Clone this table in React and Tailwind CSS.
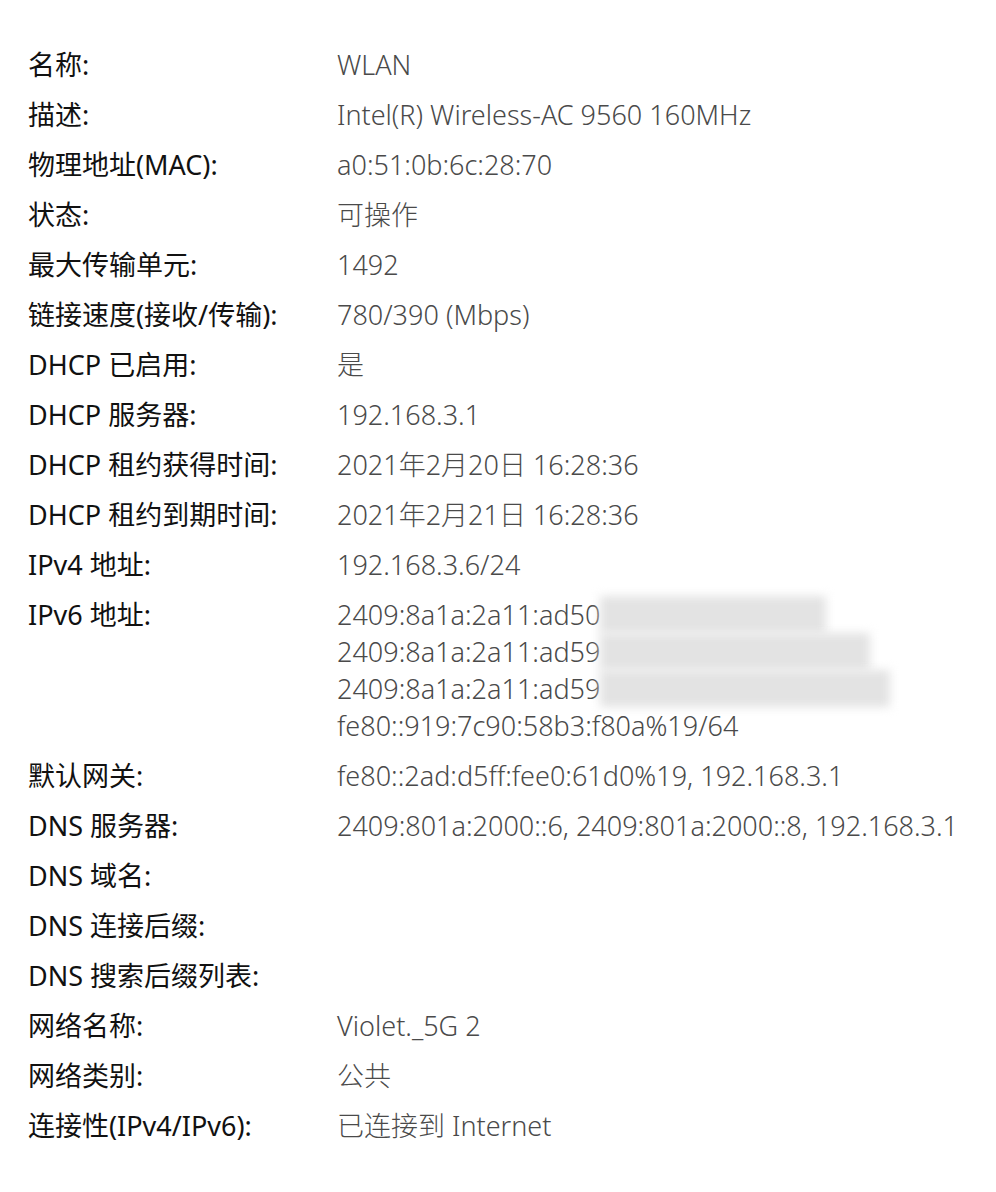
import React from "react";

const rows = [
  ["名称:", ["WLAN"]],
  ["描述:", ["Intel(R) Wireless-AC 9560 160MHz"]],
  ["物理地址(MAC):", ["a0:51:0b:6c:28:70"]],
  ["状态:", ["可操作"]],
  ["最大传输单元:", ["1492"]],
  ["链接速度(接收/传输):", ["780/390 (Mbps)"]],
  ["DHCP 已启用:", ["是"]],
  ["DHCP 服务器:", ["192.168.3.1"]],
  ["DHCP 租约获得时间:", ["2021年2月20日 16:28:36"]],
  ["DHCP 租约到期时间:", ["2021年2月21日 16:28:36"]],
  ["IPv4 地址:", ["192.168.3.6/24"]],
  [
    "IPv6 地址:",
    [
      { text: "2409:8a1a:2a11:ad50", hidden: "w-[226px]" },
      { text: "2409:8a1a:2a11:ad59", hidden: "w-[270px]" },
      { text: "2409:8a1a:2a11:ad59", hidden: "w-[290px]" },
      "fe80::919:7c90:58b3:f80a%19/64",
    ],
  ],
  ["默认网关:", ["fe80::2ad:d5ff:fee0:61d0%19, 192.168.3.1"]],
  ["DNS 服务器:", ["2409:801a:2000::6, 2409:801a:2000::8, 192.168.3.1"]],
  ["DNS 域名:", []],
  ["DNS 连接后缀:", []],
  ["DNS 搜索后缀列表:", []],
  ["网络名称:", ["Violet._5G 2"]],
  ["网络类别:", ["公共"]],
  ["连接性(IPv4/IPv6):", ["已连接到 Internet"]],
];

function Value({ line }) {
  if (typeof line === "string") return <div className="whitespace-nowrap">{line}</div>;
  return (
    <div className="flex items-center whitespace-nowrap">
      <span>{line.text}</span>
      <span className={`inline-block h-[37px] bg-[#e3e3e3] blur-[5px] ${line.hidden}`} />
    </div>
  );
}

export default function App() {
  return (
    <div
      className="min-h-[1192px] w-[996px] overflow-hidden bg-white pt-[46px] pl-[28px] text-[27px] leading-[37px]"
      style={{ fontFamily: '"Noto Sans", "Noto Sans CJK SC", sans-serif' }}
    >
      <div className="flex flex-col gap-[13px]">
        {rows.map(([label, values]) => (
          <div key={label} className="flex">
            <div className="w-[309px] shrink-0 whitespace-nowrap text-[#111]">{label}</div>
            <div className="text-[#4a4a4a] font-light">
              {values.map((v, i) => (
                <Value key={i} line={v} />
              ))}
            </div>
          </div>
        ))}
      </div>
    </div>
  );
}
